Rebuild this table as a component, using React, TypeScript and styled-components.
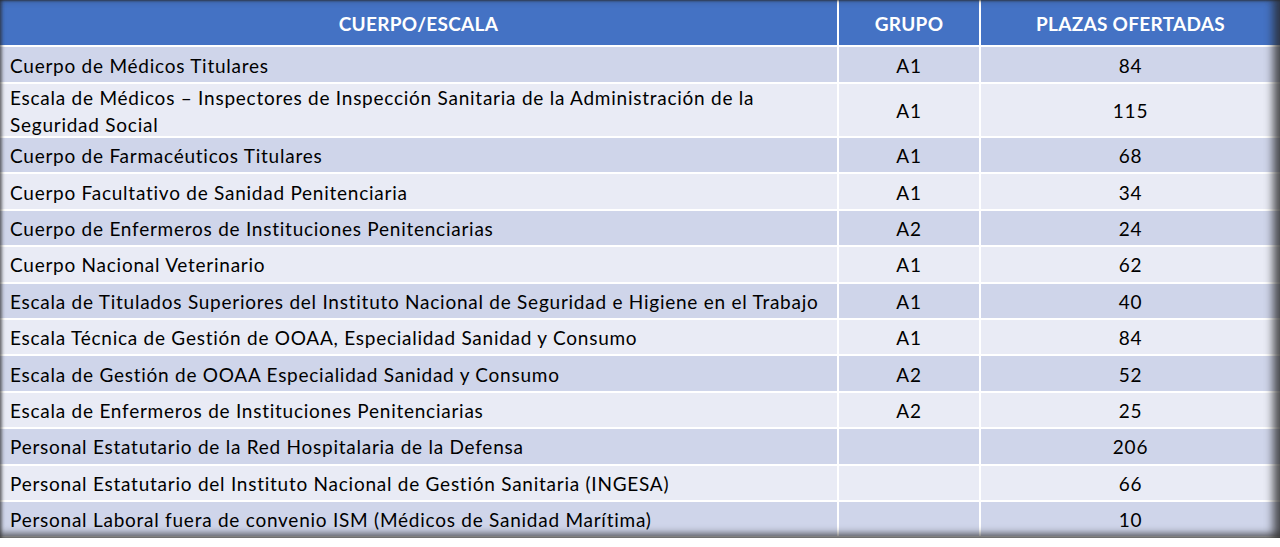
import React from "react";
import styled, { createGlobalStyle } from "styled-components";

const Global = createGlobalStyle`
  html, body { margin: 0; padding: 0; background: #ffffff; }
  body { font-family: "Lato", "Open Sans", "Liberation Sans", sans-serif; }
`;

const Frame = styled.div`
  position: relative;
  width: 1280px;
  height: 538px;
  overflow: hidden;
  background: #ffffff;
  &::after {
    content: "";
    position: absolute;
    inset: 0;
    pointer-events: none;
    box-shadow:
      inset -9px 0 8px -2px rgba(40, 40, 40, 0.75),
      inset 0 -7px 7px -2px rgba(40, 40, 40, 0.6),
      inset 3px 0 3px -1px rgba(40, 40, 40, 0.55),
      inset 0 2px 2px -1px rgba(40, 40, 40, 0.6);
  }
`;

const Grid = styled.div`
  display: grid;
  grid-template-columns: 837px 140px 1fr;
  grid-auto-rows: 34.4px;
  grid-template-rows: 45px 35px 52px;
  column-gap: 2px;
  row-gap: 2px;
  background: #ffffff;
`;

const HeadCell = styled.div`
  background: #4472c4;
  color: #ffffff;
  font-weight: 700;
  font-size: 19px;
  letter-spacing: 0.3px;
  display: flex;
  align-items: center;
  justify-content: center;
  padding-top: 2px;
`;

const Cell = styled.div<{ $odd: boolean; $center?: boolean }>`
  background: ${(p) => (p.$odd ? "#cfd5ea" : "#e9ebf5")};
  color: #000000;
  font-size: 19px;
  line-height: 27px;
  letter-spacing: 0.75px;
  display: flex;
  align-items: center;
  justify-content: ${(p) => (p.$center ? "center" : "flex-start")};
  padding: 1px ${(p) => (p.$center ? "0" : "10px")} 0;
`;

const NameText = styled.span<{ $wrap?: boolean }>`
  max-width: 790px;
  white-space: ${(p) => (p.$wrap ? "normal" : "nowrap")};
`;

const rows: [string, string, string][] = [
  ["Cuerpo de Médicos Titulares", "A1", "84"],
  [
    "Escala de Médicos – Inspectores de Inspección Sanitaria de la Administración de la Seguridad Social",
    "A1",
    "115",
  ],
  ["Cuerpo de Farmacéuticos Titulares", "A1", "68"],
  ["Cuerpo Facultativo de Sanidad Penitenciaria", "A1", "34"],
  ["Cuerpo de Enfermeros de Instituciones Penitenciarias", "A2", "24"],
  ["Cuerpo Nacional Veterinario", "A1", "62"],
  [
    "Escala de Titulados Superiores del Instituto Nacional de Seguridad e Higiene en el Trabajo",
    "A1",
    "40",
  ],
  ["Escala Técnica de Gestión de OOAA, Especialidad Sanidad y Consumo", "A1", "84"],
  ["Escala de Gestión de OOAA Especialidad Sanidad y Consumo", "A2", "52"],
  ["Escala de Enfermeros de Instituciones Penitenciarias", "A2", "25"],
  ["Personal Estatutario de la Red Hospitalaria de la Defensa", "", "206"],
  ["Personal Estatutario del Instituto Nacional de Gestión Sanitaria (INGESA)", "", "66"],
  ["Personal Laboral fuera de convenio ISM (Médicos de Sanidad Marítima)", "", "10"],
];

export default function App() {
  return (
    <>
      <Global />
      <Frame>
        <Grid>
          <HeadCell>CUERPO/ESCALA</HeadCell>
          <HeadCell>GRUPO</HeadCell>
          <HeadCell>PLAZAS OFERTADAS</HeadCell>
          {rows.map(([name, g, n], i) => {
            const odd = i % 2 === 0;
            return (
              <React.Fragment key={i}>
                <Cell $odd={odd}>
                  <NameText $wrap={i === 1}>{name}</NameText>
                </Cell>
                <Cell $odd={odd} $center>
                  {g}
                </Cell>
                <Cell $odd={odd} $center>
                  {n}
                </Cell>
              </React.Fragment>
            );
          })}
        </Grid>
      </Frame>
    </>
  );
}
